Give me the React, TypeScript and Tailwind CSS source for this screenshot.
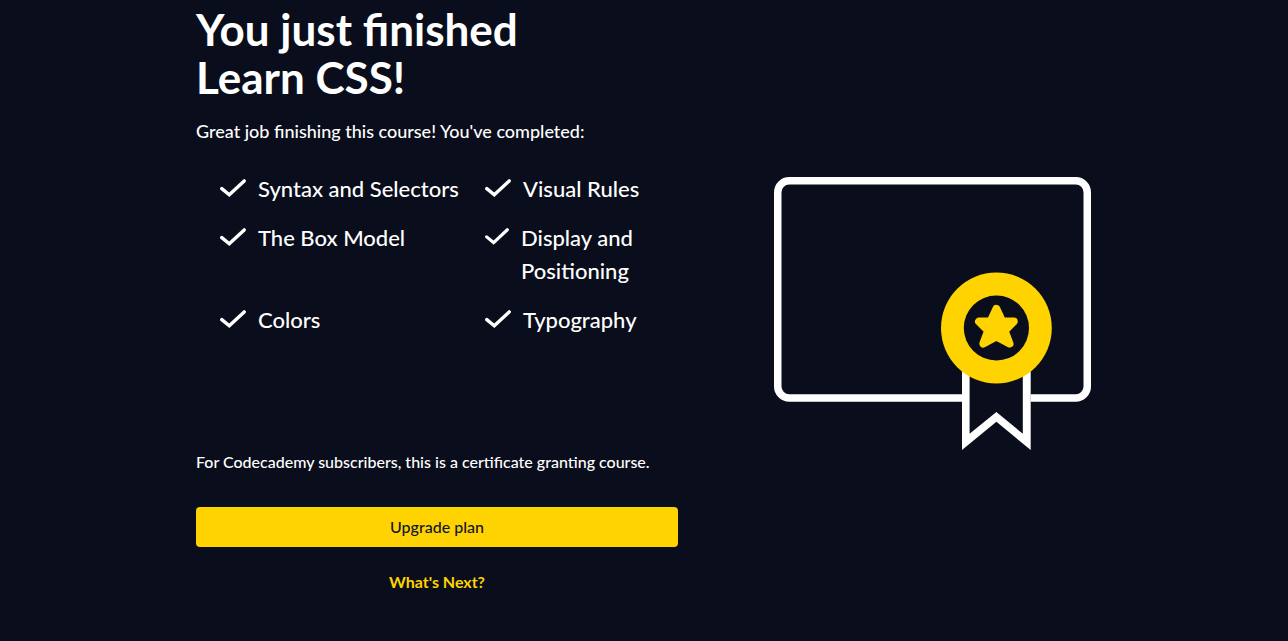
type Topic = { name: string };

const topics: Topic[] = [
  { name: "Syntax and Selectors" },
  { name: "Visual Rules" },
  { name: "The Box Model" },
  { name: "Display and Positioning" },
  { name: "Colors" },
  { name: "Typography" },
];

function CheckIcon() {
  return (
    <svg
      viewBox="0 0 26 19"
      className="mt-[7px] w-[26px] min-w-6 shrink"
      fill="none"
      stroke="currentColor"
      strokeWidth="3.4"
      strokeLinecap="round"
      aria-hidden="true"
    >
      <path d="M1.8 9.6 9.3 15.8 24.2 1.9" />
    </svg>
  );
}

function Certificate() {
  return (
    <svg
      viewBox="0 0 317 273"
      className="w-[317px] shrink-0"
      fill="none"
      role="img"
      aria-label="Certificate"
    >
      <rect x="3.75" y="3.75" width="309.5" height="217.2" rx="11.5" stroke="#fff" strokeWidth="7.5" />
      <path d="M188 180h68.5v93L222.4 245 188 273z" fill="#0a0d1b" />
      <path
        d="M188 180v93l34.4-28.2L256.7 273v-93h-7.9v76.8l-26.4-21.8-26.8 21.8V180z"
        fill="#fff"
      />
      <circle cx="222.4" cy="151" r="55.4" fill="#ffd300" />
      <circle cx="222.4" cy="151" r="32.6" fill="#0a0d1b" />
      <path
        d="M222.4 132l5.8 12.5h11.6l-9.2 9.2 4.9 12.9-13.1-7.1-13.1 7.1 4.9-12.9-9.2-9.2h11.6z"
        fill="#ffd300"
        stroke="#ffd300"
        strokeWidth="8"
        strokeLinejoin="round"
      />
    </svg>
  );
}

export default function App() {
  return (
    <main className="min-h-screen bg-[#0a0d1b] px-6 pt-[5px] pb-10 font-['Lato',sans-serif] font-medium text-white">
      <div className="mx-auto flex max-w-[896px] items-start gap-24">
        <section className="w-[482px]">
          <h1 className="text-[44px] leading-12 font-bold">
            You just finished
            <br />
            Learn CSS!
          </h1>
          <p className="mt-4 text-lg leading-7">
            Great job finishing this course! You've completed:
          </p>
          <ul className="mt-[27px] grid min-h-64 grid-cols-[241px_169px] content-start gap-x-6 gap-y-4 pl-6 text-[22px] leading-[33px]">
            {topics.map((topic) => (
              <li key={topic.name} className="flex items-start gap-3">
                <CheckIcon />
                <span>{topic.name}</span>
              </li>
            ))}
          </ul>
          <p className="mt-[22px] text-base leading-6">
            For Codecademy subscribers, this is a certificate granting course.
          </p>
          <button
            type="button"
            className="mt-[33px] h-10 w-full rounded bg-[#ffd300] text-base text-[#10162f]"
          >
            Upgrade plan
          </button>
          <div className="mt-[23px] text-center">
            <a href="#next" className="text-base leading-6 font-bold text-[#ffd300]">
              What's Next?
            </a>
          </div>
        </section>
        <div className="mt-[172px]">
          <Certificate />
        </div>
      </div>
    </main>
  );
}
